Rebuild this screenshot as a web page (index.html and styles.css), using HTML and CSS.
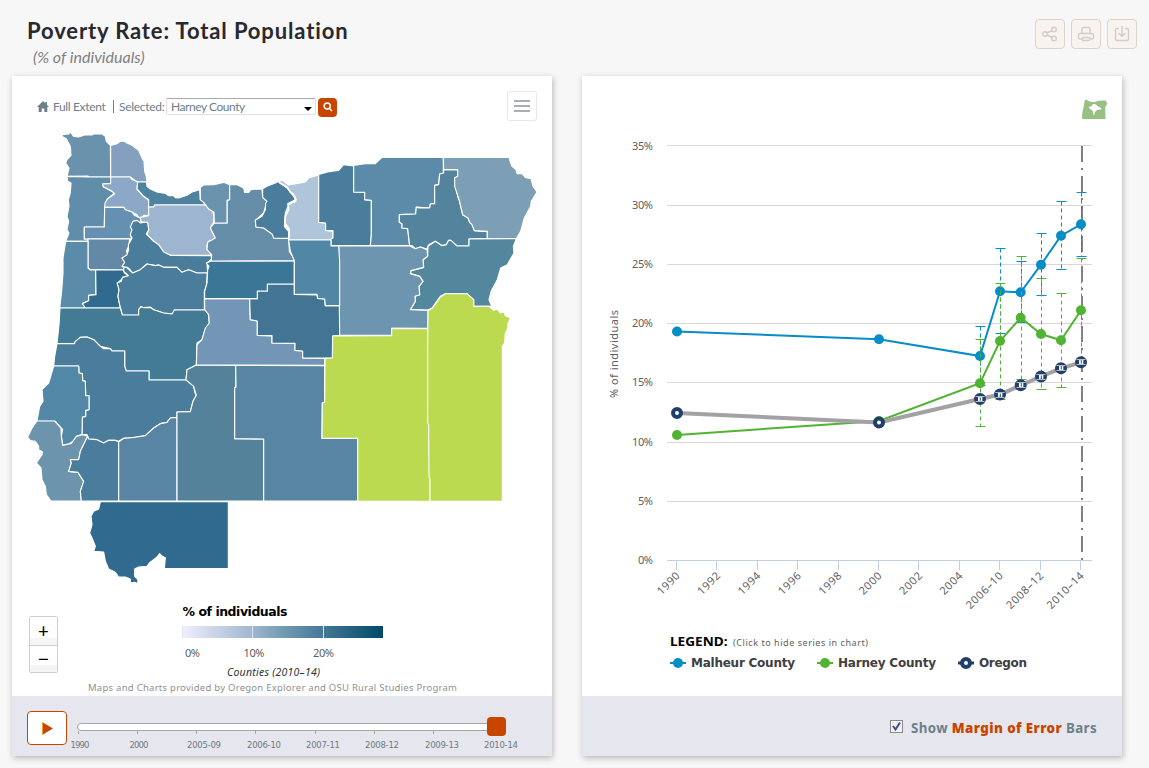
FILE: index.html
```
<!DOCTYPE html>
<html lang="en">
<head>
<meta charset="utf-8">
<title>Poverty Rate: Total Population</title>
<link rel="stylesheet" href="styles.css">
</head>
<body>
<header class="page-head">
  <div class="titles">
    <h1>Poverty Rate: Total Population</h1>
    <p class="subtitle">(% of individuals)</p>
  </div>
  <div class="actions">
    <button class="action" aria-label="Share"><svg width="18" height="18" viewBox="0 0 18 18"><circle cx="4" cy="9" r="2.3"/><circle cx="13" cy="4.5" r="2.3"/><circle cx="13" cy="13.5" r="2.3"/><path d="M6 8l5-2.5M6 10l5 2.5"/></svg></button>
    <button class="action" aria-label="Print"><svg width="18" height="18" viewBox="0 0 18 18"><path d="M5 8.5V4q0-1.500 1.500-1.500h5Q13 2.500 13 4v4.500M4.500 14H3q-1.500 0-1.500-1.500V10Q1.500 8.500 3 8.500h12q1.500 0 1.500 1.500v2.500Q16.500 14 15 14h-1.500"/><rect x="5" y="12.500" width="8" height="3" rx="1.400"/></svg></button>
    <button class="action" aria-label="Download"><svg width="18" height="18" viewBox="0 0 18 18"><path d="M6 3.500H4Q2.500 3.500 2.500 5v9q0 1.500 1.500 1.500h10q1.500 0 1.500-1.500V5q0-1.500-1.500-1.500h-2M9 1v10M5.700 8L9 11.200 12.300 8"/></svg></button>
  </div>
</header>
<main class="cards">
  <section class="card">
    <div class="toolbar">
      <svg class="home" width="12" height="11" viewBox="0 0 12 11"><path d="M6 0L0 6h1.700v5h3V7.500h2.600V11h3V6H12L10 4V1H8.300v1.300z"/></svg>
      <span class="extent">Full Extent</span>
      <span class="bar"></span>
      <span class="selected">Selected:</span>
      <span class="select"><span>Harney County</span><svg width="8" height="4" viewBox="0 0 8 4"><path d="M0 0h8L4 4z"/></svg></span>
      <button class="search" aria-label="Search"><svg width="10" height="10" viewBox="0 0 10 10"><circle cx="4.200" cy="4" r="3"/><path d="M6.300 6.200L9 9"/></svg></button>
      <button class="menu" aria-label="Menu"><i></i><i></i><i></i></button>
    </div>
    <div class="map-wrap">
      <svg class="map" width="540" height="572" viewBox="36 372 1620 1716">
        <defs>
          <linearGradient id="ramp"><stop offset="0" stop-color="#f1eeff"/><stop offset=".35" stop-color="#a0b6d0"/><stop offset=".5" stop-color="#739bb3"/><stop offset=".7" stop-color="#457897"/><stop offset="1" stop-color="#00496b"/></linearGradient>
        </defs>
        <g class="counties" transform="translate(1 -1)">
          <path fill="#6b92ad" d="M184 405L206 403 210 397 220 410 235 412 255 405 275 406 280 403 305 403 315 410 318 425 330 437 331 532 265 532 262 529 200 530 206 505 196 490 200 480 212 467 210 440 198 417 188 412z"/>
          <path fill="#859fbf" d="M331 437L350 432 360 425 370 424 380 430 395 437 415 452 425 475 431 485 433 515 438 530 440 547 412 547 405 543 390 532 331 532z"/>
          <path fill="#5f8daa" d="M200 530L265 532 331 532 331 552 307 553 309 561 343 580 322 597 313 623 312 682 252 682 252 718 263 718 263 725 196 725 206 700 200 690 205 665 200 650 206 620 204 600 210 580 212 550 202 545z"/>
          <path fill="#8ba8c8" d="M331 532L390 532 393 538 412 547 410 568 430 590 445 602 445 648 430 647 425 655 413 652 410 645 395 637 375 630 370 623 313 623 314 610 322 597 343 582 333 573 309 561 307 553 331 552z"/>
          <path fill="#4f829e" d="M412 547L438 547 440 560 450 568 470 577 495 581 505 588 518 587 525 594 535 595 560 587 575 577 598 570 600 600 610 608 615 616 463 616 460 622 445 622 445 600 430 590 410 568z"/>
          <path fill="#6590b1" d="M313 623L370 623 375 630 395 637 402 647 413 652 420 655 422 668 398 665 393 680 395 695 390 705 395 717 252 718 252 682 312 682z"/>
          <path fill="#9db5cf" d="M445 648L445 622 460 622 463 616 617 616 625 628 637 635 641 650 640 668 630 685 635 695 640 705 646 715 640 720 625 725 620 735 620 750 628 755 632 767 510 767 490 757 475 735 460 725 440 705 445 690 442 670 422 666 420 653z"/>
          <path fill="#6389a6" d="M263 718L388 718 385 740 378 755 385 770 365 775 380 790 370 811 270 810 263 805z"/>
          <path fill="#4a7c9b" d="M398 665L410 662 420 670 430 668 442 668 445 690 438 703 460 725 475 735 490 757 510 767 632 768 634 778 620 790 622 820 590 820 565 810 545 818 530 803 490 803 475 796 465 798 440 793 420 810 397 820 385 805 365 800 373 788 365 775 380 765 385 750 384 735 390 725 395 715 390 705 395 690 390 682z"/>
          <path fill="#5a8ba9" d="M196 725L263 725 263 805 270 811 286 811 287 885 265 887 265 903 248 910 255 925 178 925 184 875 188 820 188 775z"/>
          <path fill="#306a8e" d="M286 811L370 811 372 820 385 828 370 833 352 850 356 870 353 890 360 925 255 925 246 912 265 903 265 887 287 885z"/>
          <path fill="#4a7c9b" d="M370 805L378 802 397 820 420 810 440 793 465 798 475 796 490 803 530 803 545 818 565 810 590 820 621 820 618 860 612 875 612 931 522 931 518 943 490 940 460 930 450 923 430 924 422 921 415 930 416 947 366 947 358 915 353 890 356 870 350 850 363 845 366 833 385 828 370 815z"/>
          <path fill="#437b95" d="M179 925L360 925 366 946 415 946 415 930 422 921 430 924 450 923 460 930 490 940 515 943 522 931 613 931 614 927 625 945 627 972 615 990 605 1020 590 1030 588 1096 560 1110 557 1141 446 1141 446 1114 378 1114 373 1100 373 1054 335 1054 330 1047 300 1040 280 1020 260 1012 240 1013 220 1032 170 1032 176 975z"/>
          <path fill="#4a7c9b" d="M170 1032L222 1032 225 1025 240 1013 260 1012 280 1020 300 1040 310 1047 330 1047 335 1054 373 1054 373 1100 378 1114 446 1114 446 1141 557 1141 578 1153 584 1180 588 1187 578 1205 570 1236 530 1237 530 1253 510 1255 500 1268 480 1272 460 1285 435 1308 400 1315 370 1316 355 1325 345 1322 325 1322 310 1330 290 1320 265 1318 260 1305 245 1305 246 1252 256 1250 256 1232 266 1230 266 1188 256 1188 255 1145 247 1143 246 1122 236 1120 235 1099 160 1099 163 1070z"/>
          <path fill="#5287a6" d="M160 1099L235 1099 236 1120 246 1122 247 1143 255 1145 256 1188 266 1188 266 1230 256 1232 256 1250 246 1252 245 1305 228 1310 225 1320 205 1333 187 1337 183 1310 187 1290 165 1265 110 1264 118 1220 128 1205 125 1170 145 1150z"/>
          <path fill="#6c94ad" d="M110 1264L163 1264 182 1285 183 1310 187 1337 213 1331 228 1310 247 1305 262 1310 240 1355 235 1380 210 1382 213 1390 205 1415 233 1418 250 1445 240 1475 243 1504 152 1504 138 1485 135 1460 125 1440 122 1405 108 1390 125 1365 127 1357 115 1350 115 1340 105 1325 90 1323 82 1313 95 1285z"/>
          <path fill="#4a7c9b" d="M262 1310L265 1318 290 1320 310 1330 325 1322 345 1322 355 1327 355 1504 243 1504 240 1475 250 1445 233 1418 205 1415 213 1390 210 1380 235 1380 240 1355z"/>
          <path fill="#5985a5" d="M355 1327L370 1316 400 1313 435 1308 460 1285 480 1272 500 1268 510 1255 530 1253 530 1504 355 1504z"/>
          <path fill="#306a8e" d="M300 1506L684 1506 684 1707 492 1707 495 1674 486 1670 478 1662 470 1672 460 1680 447 1690 440 1700 415 1702 403 1708 403 1730 413 1740 412 1752 403 1748 390 1750 390 1738 375 1732 355 1732 345 1718 325 1708 315 1685 310 1657 280 1655 285 1640 275 1615 268 1600 275 1575 272 1550 280 1535 295 1528z"/>
          <path fill="#54829b" d="M588 1096L706 1097 707 1162 703 1165 703 1317 790 1318 790 1504 530 1504 530 1237 570 1236 578 1205 588 1187 580 1160 557 1141 560 1110z"/>
          <path fill="#5985a5" d="M706 1097L973 1098 973 1207 966 1210 965 1316 1072 1316 1072 1504 790 1504 790 1318 703 1317 703 1165 707 1162z"/>
          <path fill="#7395b6" d="M613 897L748 897 750 960 771 964 771 1007 815 1009 815 1030 884 1031 884 1052 907 1054 907 1075 973 1076 973 1097 588 1096 590 1035 605 1020 615 985 627 970 625 945 613 930z"/>
          <path fill="#427594" d="M748 897L771 897 771 874 801 874 801 853 882 853 882 884 950 886 952 896 973 898 975 918 1018 918 1018 1007 997 1009 997 1075 907 1075 907 1054 884 1052 884 1031 815 1030 815 1008 771 1007 771 964 750 960z"/>
          <path fill="#3a7696" d="M633 784L882 784 882 853 801 853 801 874 771 874 771 897 613 897 613 875 620 850 622 810 626 800 618 790z"/>
          <path fill="#658da7" d="M686 555L710 555 730 565 733 578 745 578 752 569 785 568 787 593 800 605 790 640 765 662 767 682 790 685 820 705 820 715 865 716 867 755 885 783 633 784 634 765 620 750 622 728 645 715 630 685 642 670 680 670 680 602 686 600z"/>
          <path fill="#6b93ae" d="M600 563L610 556 640 555 670 548 688 555 688 600 680 602 680 670 642 670 641 638 625 628 610 608 600 600z"/>
          <path fill="#4a7c9b" d="M787 567L800 560 825 550 835 545 860 562 880 585 887 600 865 612 863 640 855 645 853 680 868 695 865 716 820 715 815 703 790 685 767 682 765 662 785 650 795 630 796 610 800 605 787 593z"/>
          <path fill="#afc5d9" stroke="none" d="M835 547L845 541 865 556 900 550 915 547 925 535 955 526 955 668 976 670 976 692 998 695 998 715 992 721 865 721 868 690 855 670 855 640 865 615 887 605 880 590 860 565z"/>
          <path class="line" d="M838 549L860 562 870 577 880 585 887 600 863 612 865 630 855 650 853 680 866 695 865 719"/>
          <path fill="#4a7c9b" d="M955 524L985 516 1015 512 1030 495 1060 499 1060 577 1093 578 1093 600 1113 602 1113 705 1110 738 992 738 992 717 998 715 998 693 976 692 976 670 955 668z"/>
          <path fill="#5b8ba9" d="M1060 497L1100 491 1125 492 1145 473 1329 473 1329 520 1318 523 1315 555 1303 557 1303 612 1290 613 1288 625 1248 622 1246 643 1197 645 1197 668 1205 672 1205 685 1222 687 1228 738 1110 738 1113 705 1113 602 1093 600 1093 578 1060 577z"/>
          <path fill="#54839d" d="M1330 510L1372 510 1372 530 1363 535 1365 560 1375 600 1377 602 1387 645 1403 655 1408 668 1415 675 1422 693 1461 696 1461 716 1406 718 1406 739 1370 739 1350 722 1345 722 1338 735 1325 738 1305 725 1285 735 1280 748 1260 742 1245 747 1235 738 1228 738 1222 687 1205 685 1205 672 1197 668 1197 645 1246 643 1248 622 1255 625 1288 625 1290 613 1303 612 1303 557 1315 555 1318 523 1330 520z"/>
          <path fill="#7d9fb5" d="M1329 473L1526 473 1530 487 1535 500 1547 510 1550 522 1565 522 1575 533 1592 537 1598 560 1610 577 1593 605 1591 620 1572 655 1561 695 1548 717 1461 717 1461 695 1422 693 1415 675 1408 668 1403 655 1387 645 1377 602 1363 560 1363 535 1372 530 1372 510 1330 510z"/>
          <path fill="#53879d" d="M1406 718L1548 717 1539 740 1541 760 1521 795 1501 805 1491 840 1473 873 1466 900 1474 920 1420 920 1420 900 1400 882 1335 882 1320 890 1295 925 1283 931 1230 930 1245 905 1244 890 1258 885 1256 860 1268 845 1258 830 1230 822 1232 813 1270 803 1268 780 1282 770 1283 740 1305 725 1325 738 1338 735 1345 722 1352 722 1370 739 1406 739z"/>
          <path fill="#6d95af" d="M1015 739L1228 738 1245 747 1260 742 1280 750 1282 770 1268 780 1270 803 1232 813 1230 822 1258 830 1268 845 1256 860 1258 885 1244 890 1245 905 1230 930 1283 932 1283 986 1174 986 1174 1007 1018 1007z"/>
          <path fill="#5186a5" d="M865 721L992 721 992 739 1015 739 1018 785 1018 918 975 918 973 898 952 896 950 884 882 884 882 783 870 755z"/>
          <path fill="#bbda50" d="M997 1009L1174 1008 1174 986 1283 987 1282 1200 1285 1275 1289 1440 1289 1505 1072 1505 1072 1316 965 1316 966 1210 973 1207 974 1076 996 1075z"/>
          <path fill="#bbda50" d="M1283 933L1297 925 1320 892 1335 882 1400 882 1420 900 1420 920 1467 920 1480 932 1490 928 1500 940 1512 937 1515 948 1530 955 1522 975 1521 990 1515 1000 1513 1030 1506 1040 1506 1505 1289 1505 1289 1440 1286 1430 1285 1275 1282 1270 1282 1060z"/>
        </g>
        <g transform="scale(3)" class="map-key">
          <text class="key-title" x="182.500" y="616" textLength="105">% of individuals</text>
          <rect x="182" y="626" width="201" height="12" fill="url(#ramp)"/>
          <path class="key-tick" d="M182.500 626v12M252.500 626v12M323.500 626v12"/>
          <text x="185" y="657" textLength="15">0%</text>
          <text x="243.500" y="657" textLength="21">10%</text>
          <text x="313" y="657" textLength="21">20%</text>
          <text class="key-note" x="227" y="676" textLength="93">Counties (2010–14)</text>
          <text class="credit" x="88" y="691" textLength="369">Maps and Charts provided by Oregon Explorer and OSU Rural Studies Program</text>
        </g>
      </svg>
      <div class="zoomer"><button>+</button><button>−</button></div>
    </div>
    <footer class="foot timeline">
      <button class="play" aria-label="Play"><svg width="11" height="13" viewBox="0 0 11 13"><path fill="#c84500" d="M0 0l11 6.500L0 13z"/><path d="M.5 0v13" stroke="#f5a02c"/></svg></button>
      <svg class="slider" width="470" height="60" viewBox="68 696 470 60" id="slider">
        <rect x="77.500" y="723.500" width="420" height="7" rx="3.500" fill="#fff" stroke="#a6a6a6"/>
        <path d="M78.500 731v3M137.500 731v3M196.500 731v3M255.500 731v3M315.500 731v3M374.500 731v3M433.500 731v3" stroke="#a6a6a6"/>
        <rect x="487" y="717" width="19" height="19" rx="4" fill="#c84500"/>
      </svg>
    </footer>
  </section>
  <section class="card">
    <svg id="chart" width="540" height="620" viewBox="582 76 540 620">
      <g transform="translate(.7 0)">
        <path fill="#98c083" d="M1084 100l2-.3 2 1.600 5 1 5-1.500 7-.3 1.500 3-2 4 .3 11.500h-23.500l.3-6 1.700-8z"/>
        <path fill="#fff" stroke="#7eaa6b" stroke-width=".6" d="M1087 106.500l3.500-.5q.5-2.500 2.500-2.500 2.500 0 4.500 2.500l3.500 2q.8 1.500-1 2l-3.500.3-2 2-.5 3h-1.500l-1-4.500q-2.500-1-3-2.300z"/>
      </g>
      <g id="plot"></g>
      <text class="axis-title" transform="translate(618 398) rotate(-90)" textLength="88">% of individuals</text>
      <text class="legend-title" x="670" y="646" textLength="57.500" lengthAdjust="spacingAndGlyphs">LEGEND:</text>
      <text class="legend-hint" x="733" y="646" textLength="135">(Click to hide series in chart)</text>
      <path d="M670 663h16" stroke="#058dc7" stroke-width="2"/><circle cx="678" cy="663" r="5" fill="#058dc7"/>
      <path d="M817 663h16" stroke="#50b432" stroke-width="2"/><circle cx="825" cy="663" r="5" fill="#50b432"/>
      <path d="M958 663h16" stroke="#20406b" stroke-width="3"/><circle cx="966" cy="663" r="4" fill="#fff" stroke="#20406b" stroke-width="4"/>
      <g class="legend-items">
        <text x="691" y="667" textLength="104">Malheur County</text>
        <text x="838" y="667" textLength="98">Harney County</text>
        <text x="979" y="667" textLength="48">Oregon</text>
      </g>
    </svg>
    <footer class="foot margin-row">
      <span class="check"><svg width="9" height="9" viewBox="0 0 9 9"><path d="M1 4l2.500 3.500L8 .5"/></svg></span>
      <span>Show <b>Margin of Error</b> Bars</span>
    </footer>
  </section>
</main>
<script src="app.js"></script>
</body>
</html>
```
FILE: styles.css
```
* { box-sizing: border-box; }
body { margin: 0; width: 1149px; height: 768px; overflow: hidden; background: #f7f7f7; font-family: Lato, sans-serif; }
button { padding: 0; margin: 0; font: inherit; display: flex; align-items: center; justify-content: center; }
.page-head { height: 76px; display: flex; justify-content: space-between; padding: 17px 12px 0 27px; }
h1 { margin: 0; font-size: 22px; line-height: 27px; font-weight: 700; color: #27292e; letter-spacing: .87px; }
.subtitle { margin: 3px 0 0 6px; font-size: 16px; line-height: 20px; font-style: italic; color: #808080; letter-spacing: .02px; }
.actions { display: flex; gap: 6px; padding-top: 2px; }
.action { width: 30px; height: 30px; background: #f7f3ee; border: 1px solid #dcd2c8; border-radius: 4px; }
.action svg { fill: none; stroke: #d3cdc7; stroke-width: 1.4; }
.cards { display: flex; gap: 30px; padding-left: 12px; }
.card { width: 540px; height: 680px; background: #fff; box-shadow: 1px 2px 6px rgba(60,45,40,.32); display: flex; flex-direction: column; }
.card > svg { display: block; flex: none; }
.toolbar { height: 48px; flex: none; display: flex; align-items: center; padding: 14px 15px 0 25px; font-size: 12px; color: #6d7f88; }
.home { fill: #6d7f88; margin-top: -2px; }
.extent { margin: -2px 0 0 4px; width: 56px; white-space: nowrap; letter-spacing: -.35px; }
.bar { width: 1px; height: 13px; background: #6d7f88; margin: -2px 5px 0 4px; }
.selected { width: 47px; margin-top: -2px; white-space: nowrap; letter-spacing: -.28px; }
.select { width: 150px; height: 17px; border: 1px solid #e3e0ea; border-top-color: #aaa6b2; border-radius: 2px; display: flex; align-items: center; justify-content: space-between; padding: 0 3px 0 4px; margin-top: -1px; letter-spacing: -.45px; }
.select svg { margin-top: 4px; }
.search { width: 19px; height: 19px; margin-left: 2px; border: 0; border-radius: 4px; background: #c84500; }
.search svg { fill: none; stroke: #fff; stroke-width: 1.5; }
.menu { width: 30px; height: 30px; margin: -3px 0 0 auto; border: 1px solid #e6e6ec; border-radius: 3px; background: #fff; flex-direction: column; gap: 3px; }
.menu i { width: 16px; height: 2px; background: #a9adb4; }
.map-wrap { height: 572px; flex: none; position: relative; }
.map { display: block; }
.counties path { stroke: #fff; stroke-width: 3.4; stroke-linejoin: round; }
.counties .line { fill: none; stroke-width: 5; }
.map-key { font: 11px "Noto Sans", sans-serif; fill: #606060; }
.key-title { font: 700 12.500px "DejaVu Sans", sans-serif; fill: #000; }
.key-tick { stroke: #dde3ea; }
.key-note { font-size: 10.500px; font-style: italic; fill: #333; }
.credit { font-size: 9.500px; fill: #909090; }
.zoomer { position: absolute; left: 17px; top: 492px; width: 29px; height: 57px; border: 1px solid #cfcfcf; border-radius: 2px; }
.zoomer button { width: 27px; height: 28px; border: 0; background: linear-gradient(#fff 75%, #f5f5f5 75%); font: 19px "Noto Sans", sans-serif; color: #000; }
.zoomer button + button { border-top: 1px solid #cfcfcf; height: 27px; }
.foot { height: 60px; background: #e6e7ee; display: flex; align-items: center; }
.timeline { padding-left: 15px; }
.play { width: 40px; height: 34px; margin-top: 4px; border: 1px solid #c84500; border-radius: 4px; background: #fff; }
.slider { margin-left: 1px; }
.slider text { font: 8.500px "DejaVu Sans", sans-serif; fill: #6d7880; text-anchor: middle; }
.grid { stroke: #d8d8d8; }
.axis { stroke: #c0d0e0; fill: none; }
.labels, .axis-title { font: 11px "Noto Sans", sans-serif; fill: #606060; }
.legend-title { font: 700 12.500px "Noto Sans", sans-serif; fill: #000; }
.legend-hint { font: 9px "Noto Sans", sans-serif; fill: #606060; }
.legend-items { font: 700 12px "DejaVu Sans", sans-serif; fill: #404040; }
.margin-row { justify-content: flex-end; padding: 4px 25px 0 0; font: 700 13.300px "Noto Sans", sans-serif; color: #6d7f88; letter-spacing: .41px; }
.margin-row b { color: #c84500; }
.check { width: 13px; height: 13px; margin: -4px 8px 0 0; border: 1px solid #8a8a8a; background: #f4f4f6; display: flex; align-items: center; justify-content: center; }
.check svg { fill: none; stroke: #3f4f95; stroke-width: 2; }
```
FILE: app.js
```
const plot = document.getElementById('plot');
const xs = [677, 879, 980, 1000, 1020.7, 1041, 1061, 1081];
const blue = [331.5, 339.3, 356, 291.3, 292.3, 264.7, 235.7, 224.3];
const green = [435, 421, 383.3, 341, 317.7, 334, 340.3, 310.3];
const state = [413, 422.5, 399, 394.5, 385.3, 376.5, 368.3, 362.3];
const blueErr = [[326.5, 385.5], [248.5, 333.5], [261.5, 322.5], [233.5, 295.5], [201.5, 269.5], [192.5, 256.5]];
const greenErr = [[339.5, 426.5], [283.5, 399.5], [256.5, 379.5], [278.5, 389.5], [293.5, 387.5], [258.5, 361.5]];
let out = '';

for (let i = 1; i <= 7; i++) {
  const y = Math.round(560 - i * 59.14) - (i === 7 || i === 3 ? 0.5 : -0.5);
  out += `<path class="grid" d="M667 ${y}h425"/>`;
}
out += '<path class="axis" d="M667 560.5h425"/><g class="labels">';
for (let i = 0; i <= 7; i++) {
  const w = i < 2 ? 15 : 21;
  out += `<text x="${653 - w}" y="${563.8 - i * 59.14}" textLength="${w}">${i * 5}%</text>`;
}
['1990', '1992', '1994', '1996', '1998', '2000', '2002', '2004', '2006–10', '2008–12', '2010–14'].forEach((t, i) => {
  const x = 677 + i * 40.4;
  out += `<path class="axis" d="M${Math.round(x) - 0.5} 560v10"/>`;
  out += `<text text-anchor="end" transform="translate(${x + 3.5} 576.5) rotate(-45)" textLength="${t.length > 4 ? 47 : 27}">${t}</text>`;
});
out += '</g><path d="M1082 146V560" stroke="#808080" stroke-width="2" stroke-dasharray="16 6 2 6"/>';

const line = (ys, color, w) => {
  out += `<polyline fill="none" stroke="${color}" stroke-width="${w}" points="${ys.map((y, i) => xs[i] + ',' + y).join(' ')}"/>`;
};
const errors = (list, color) => list.forEach(([a, b], i) => {
  const x = Math.round(xs[i + 2]) + 0.5;
  out += `<path stroke="${color}" stroke-dasharray="4 3" d="M${x} ${a}V${b}"/><path stroke="${color}" d="M${x - 5} ${a}h10M${x - 5} ${b}h10"/>`;
});
const dots = (ys, color) => ys.forEach((y, i) => {
  out += `<circle cx="${xs[i]}" cy="${y}" r="5" fill="${color}"/>`;
});
line(blue, '#058dc7', 2);
dots(blue, '#058dc7');
errors(blueErr, '#058dc7');
line(green, '#50b432', 2);
dots(green, '#50b432');
errors(greenErr, '#50b432');
line(state, '#a4a1a4', 4);
state.forEach((y, i) => {
  out += `<circle cx="${xs[i]}" cy="${y}" r="4" fill="#fff" stroke="#20406b" stroke-width="4"/>`;
  if (i > 1) {
    const x = Math.round(xs[i]) + 0.5;
    const m = Math.round(y);
    out += `<path stroke="#b9bcc6" d="M${x - 5} ${m - 2.5}h9M${x - 5} ${m + 2.5}h9"/><path stroke="#fff" stroke-width="1.3" d="M${x - 1.7} ${m - 2}v4M${x + 1.2} ${m - 2}v4"/><path stroke="#20406b" stroke-width=".9" d="M${x - 0.2} ${m - 1.5}v3"/>`;
  }
});
plot.innerHTML = out;

const stops = [[80, '1990', 19], [139, '2000', 19], [204, '2005-09', 34], [264, '2006-10', 34], [323, '2007-11', 34], [382, '2008-12', 34], [442, '2009-13', 34], [501, '2010-14', 34]];
document.getElementById('slider').insertAdjacentHTML('beforeend',
  stops.map(([x, t, w]) => `<text x="${x}" y="748" textLength="${w}">${t}</text>`).join(''));
```
